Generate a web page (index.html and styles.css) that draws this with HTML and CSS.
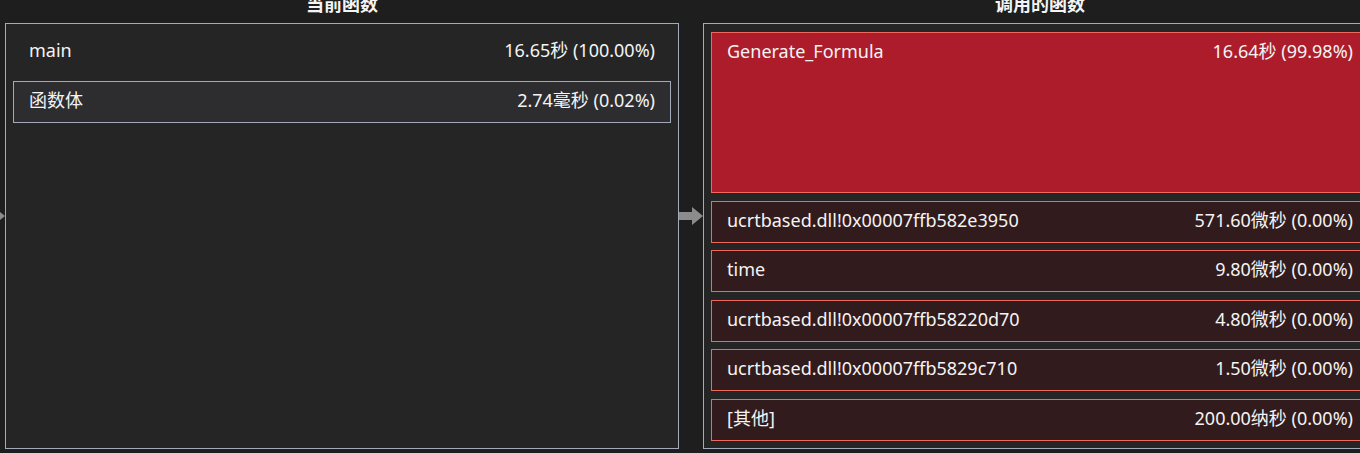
FILE: index.html
```html
<!DOCTYPE html>
<html lang="zh-CN">
<head>
    <meta charset="UTF-8">
    <title>调用树</title>
    <link rel="stylesheet" href="styles.css">
</head>
<body>
    <div class="flow">
        <div class="arrow-col">
            <svg class="arrow" width="24" height="18" viewBox="0 0 24 18"><path d="M0 5H13V0L24 9L13 18V13H0Z" fill="#8c8c8c"/></svg>
        </div>

        <div class="column">
            <div class="title">当前函数</div>
            <div class="panel current">
                <div class="row plain"><span>main</span><span>16.65秒 (100.00%)</span></div>
                <div class="row body-row"><span>函数体</span><span>2.74毫秒 (0.02%)</span></div>
            </div>
        </div>

        <div class="arrow-col">
            <svg class="arrow" width="24" height="18" viewBox="0 0 24 18"><path d="M0 5H13V0L24 9L13 18V13H0Z" fill="#8c8c8c"/></svg>
        </div>

        <div class="column">
            <div class="title">调用的函数</div>
            <div class="panel callees">
                <div class="row hot" style="height: 161px;"><span>Generate_Formula</span><span>16.64秒 (99.98%)</span></div>
                <div class="row callee"><span>ucrtbased.dll!0x00007ffb582e3950</span><span>571.60微秒 (0.00%)</span></div>
                <div class="row callee"><span>time</span><span>9.80微秒 (0.00%)</span></div>
                <div class="row callee"><span>ucrtbased.dll!0x00007ffb58220d70</span><span>4.80微秒 (0.00%)</span></div>
                <div class="row callee"><span>ucrtbased.dll!0x00007ffb5829c710</span><span>1.50微秒 (0.00%)</span></div>
                <div class="row callee"><span>[其他]</span><span>200.00纳秒 (0.00%)</span></div>
            </div>
        </div>
    </div>
</body>
</html>
```

FILE: styles.css
```css
body {
    margin: 0;
    background-color: #1e1e1e;
    color: #f4f4f4;
    font-family: "Noto Sans", "Noto Sans CJK SC", sans-serif;
    font-size: 18px;
    overflow: hidden;
}
.flow {
    display: flex;
    margin-left: -19px;
    margin-top: -8px;
}
.arrow-col {
    width: 24px;
    flex-shrink: 0;
}
.arrow {
    display: block;
    margin-top: 215px; /* lines up with the middle of the second row */
}
.column {
    width: 674px;
    flex-shrink: 0;
    display: flex;
    flex-direction: column;
}
.title {
    text-align: center;
    font-weight: bold;
    font-size: 18px;
    line-height: 24px;
    margin-bottom: 7px;
}
.panel {
    box-sizing: border-box;
    height: 426px;
    border: 1px solid #a3abbb;
    background-color: #252526;
    padding: 7px;
    display: flex;
    flex-direction: column;
}
.current {
    gap: 8px;
}
.callees {
    padding-top: 8px;
    gap: 7.5px;
}
.row {
    box-sizing: border-box;
    height: 42px;
    flex-shrink: 0;
    border: 1px solid transparent;
    padding: 0 15px;
    line-height: 37px;
    display: flex;
    justify-content: space-between;
    align-items: flex-start;
    white-space: nowrap;
}
.body-row {
    border-color: #a3abbb;
    background-color: #2d2d30;
}
.hot {
    border-color: #f0675e;
    background-color: #ad1c2b;
}
.callee {
    border-color: #f0675e;
    background-color: #321b1c;
}
```
